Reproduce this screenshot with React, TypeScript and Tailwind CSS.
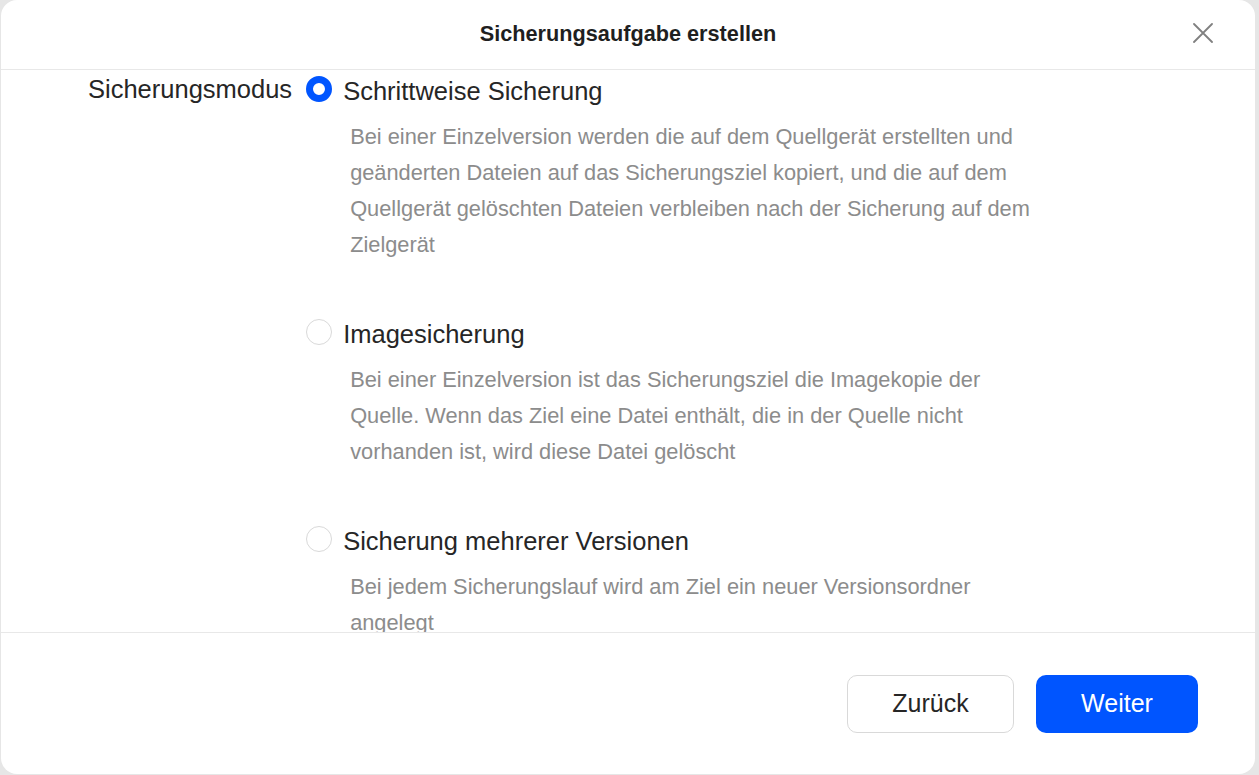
import React from "react";

const font = { fontFamily: '"Liberation Sans", Arial, sans-serif' };

function Radio({ checked }: { checked: boolean }) {
  return checked ? (
    <span className="mt-[3px] block h-[26px] w-[26px] shrink-0 rounded-full border-[7px] border-[#0055ff] bg-white" />
  ) : (
    <span className="mt-[3px] block h-[26px] w-[26px] shrink-0 rounded-full border border-[#d9d9d9] bg-white" />
  );
}

function Option({
  checked,
  title,
  lines,
  last,
}: {
  checked: boolean;
  title: string;
  lines: string[];
  last?: boolean;
}) {
  return (
    <div className={last ? "" : "mb-[53px]"}>
      <div className="flex items-start">
        <Radio checked={checked} />
        <div className="ml-[11px] text-[25.5px] leading-[36px] text-[#262626] whitespace-nowrap">{title}</div>
      </div>
      <div className="mt-[10px] pl-[44px] text-[21.8px] leading-[36px] text-[#8c8c8c]">
        {lines.map((l, i) => (
          <div key={i} className="whitespace-nowrap">
            {l}
          </div>
        ))}
      </div>
    </div>
  );
}

export default function App() {
  return (
    <div style={font} className="flex h-[775px] w-[1259px] overflow-hidden bg-[#e6e6e6]">
      <div className="ml-[1px] flex h-[774px] w-[1254px] flex-col overflow-hidden rounded-2xl bg-white">
        <div className="relative flex h-[70px] shrink-0 items-center justify-center border-b border-[#e8e8e8]">
          <div className="text-[21.7px] font-bold text-[#1f1f1f]">Sicherungsaufgabe erstellen</div>
          <svg
            className="absolute right-[42px] top-[23px]"
            width="20"
            height="20"
            viewBox="0 0 20 20"
            fill="none"
            stroke="#808080"
            strokeWidth="1.8"
            strokeLinecap="round"
          >
            <path d="M1 1 L19 19 M19 1 L1 19" />
          </svg>
        </div>
        <div className="flex-1 overflow-hidden">
          <div className="flex pt-[3px]">
            <div className="mt-[-2px] pl-[87px] pr-[14px] text-[25.5px] leading-[36px] text-[#262626] whitespace-nowrap">
              Sicherungsmodus
            </div>
            <div className="flex flex-col">
              <Option
                checked
                title="Schrittweise Sicherung"
                lines={[
                  "Bei einer Einzelversion werden die auf dem Quellgerät erstellten und",
                  "geänderten Dateien auf das Sicherungsziel kopiert, und die auf dem",
                  "Quellgerät gelöschten Dateien verbleiben nach der Sicherung auf dem",
                  "Zielgerät",
                ]}
              />
              <Option
                checked={false}
                title="Imagesicherung"
                lines={[
                  "Bei einer Einzelversion ist das Sicherungsziel die Imagekopie der",
                  "Quelle. Wenn das Ziel eine Datei enthält, die in der Quelle nicht",
                  "vorhanden ist, wird diese Datei gelöscht",
                ]}
              />
              <Option
                checked={false}
                title="Sicherung mehrerer Versionen"
                last
                lines={["Bei jedem Sicherungslauf wird am Ziel ein neuer Versionsordner", "angelegt"]}
              />
            </div>
          </div>
        </div>
        <div className="flex h-[142px] shrink-0 items-center justify-end gap-[22px] border-t border-[#e8e8e8] pr-[57px]">
          <button className="h-[58px] w-[167px] rounded-[10px] border border-[#d9d9d9] bg-white text-[25px] text-[#262626]">
            Zurück
          </button>
          <button className="h-[58px] w-[162px] rounded-[10px] bg-[#0055ff] text-[25px] text-white">Weiter</button>
        </div>
      </div>
    </div>
  );
}
